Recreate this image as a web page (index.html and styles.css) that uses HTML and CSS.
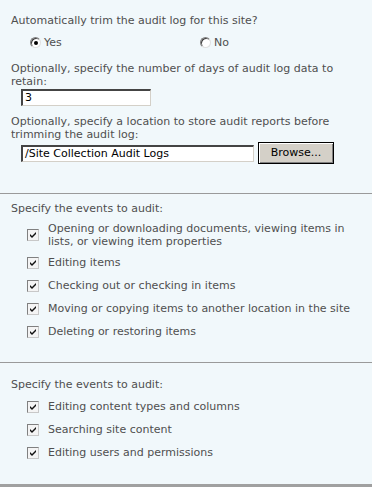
FILE: index.html
```html
<!DOCTYPE html>
<html>
<head>
<meta charset="utf-8">
<link rel="stylesheet" href="styles.css">
</head>
<body>
<div class="page">
  <section class="sec sec1">
    <p class="label">Automatically trim the audit log for this site?</p>
    <div class="radios">
      <span class="radio-item yes"><span class="radio on"></span>Yes</span>
      <span class="radio-item"><span class="radio"></span>No</span>
    </div>
    <p class="label l2">Optionally, specify the number of days of audit log data to retain:</p>
    <div class="field f1"><span class="input small">3</span></div>
    <p class="label l3">Optionally, specify a location to store audit reports before trimming the audit log:</p>
    <div class="field f2"><span class="input wide">/Site Collection Audit Logs</span><span class="btn">Browse...</span></div>
  </section>
  <div class="sep"></div>
  <section class="sec sec2">
    <p class="label">Specify the events to audit:</p>
    <ul class="checks">
      <li><span class="cb"></span><span>Opening or downloading documents, viewing items in lists, or viewing item properties</span></li>
      <li><span class="cb"></span><span>Editing items</span></li>
      <li><span class="cb"></span><span>Checking out or checking in items</span></li>
      <li><span class="cb"></span><span>Moving or copying items to another location in the site</span></li>
      <li><span class="cb"></span><span>Deleting or restoring items</span></li>
    </ul>
  </section>
  <div class="sep"></div>
  <section class="sec sec3">
    <p class="label">Specify the events to audit:</p>
    <ul class="checks">
      <li><span class="cb"></span><span>Editing content types and columns</span></li>
      <li><span class="cb"></span><span>Searching site content</span></li>
      <li><span class="cb"></span><span>Editing users and permissions</span></li>
    </ul>
  </section>
  <div class="bottom"></div>
</div>
</body>
</html>
```
FILE: styles.css
```css
html, body { margin: 0; padding: 0; background: #fff; }
body { font-family: "DejaVu Sans", Verdana, sans-serif; font-size: 11px; color: #4f4f4f; }
.page { width: 372px; height: 487px; background: #f1f8fb; display: flex; flex-direction: column; }
.sec { padding: 0 10px 0 11px; box-sizing: border-box; flex: none; }
.sec1 { padding-top: 14px; height: 193px; }
.label { margin: 0; line-height: 13px; }
.radios { display: flex; margin-top: 8px; padding-left: 19px; height: 14px; }
.radio-item { display: flex; align-items: center; height: 14px; }
.radio-item.yes { width: 170px; }
.radio { width: 11px; height: 11px; box-sizing: border-box; border-radius: 50%; border: 1px solid #808080; border-right-color: #e0e0e0; border-bottom-color: #e0e0e0; background: #fff; margin-right: 3px; position: relative; box-shadow: inset 1px 1px 0 #404040; }
.radio.on::after { content: ""; position: absolute; left: 3px; top: 3px; width: 4px; height: 4px; border-radius: 50%; background: #000; }
.l2 { margin-top: 13px; }
.l3 { margin-top: 9px; }
.field { display: flex; align-items: center; padding-left: 10px; }
.f1 { margin-top: 1px; }
.f2 { margin-top: 1px; height: 22px; }
.input { display: block; height: 17px; box-sizing: border-box; background: #fff; border: 1px solid #d4d0c8; border-top: 2px solid #444; border-left: 2px solid #444; color: #000; padding: 0 2px; line-height: 14px; font-size: 11px; }
.input.small { width: 130px; }
.input.wide { width: 233px; }
.btn { display: block; margin-left: 4px; width: 76px; height: 22px; box-sizing: border-box; background: #d4d0c8; border: 1px solid #000; box-shadow: inset 1px 1px 0 #fff, inset -1px -1px 0 #808080; text-align: center; line-height: 19px; color: #000; }
.sep { height: 1px; background: #9a9a9a; flex: none; }
.sec2 { padding-top: 8px; height: 168px; }
.sec3 { padding-top: 15px; height: 121px; }
.checks { list-style: none; margin: 4px 0 0; padding: 0 0 0 16px; }
.checks li { display: flex; align-items: center; line-height: 13px; min-height: 23px; padding: 3px 0; box-sizing: border-box; }
.cb { flex: none; width: 12px; height: 12px; box-sizing: border-box; border: 1px solid #808080; border-right-color: #c8c8c8; border-bottom-color: #c8c8c8; background: #f4f4f4 url("data:image/svg+xml;utf8,<svg xmlns='http://www.w3.org/2000/svg' width='10' height='10'><path d='M2 4 L4 6 L8 2 L8 4 L4 8 L2 6 Z' fill='%23111'/></svg>") no-repeat 0 0; margin-right: 9px; }
.bottom { margin-top: auto; height: 3px; background: #a0a0a0; flex: none; }
```
